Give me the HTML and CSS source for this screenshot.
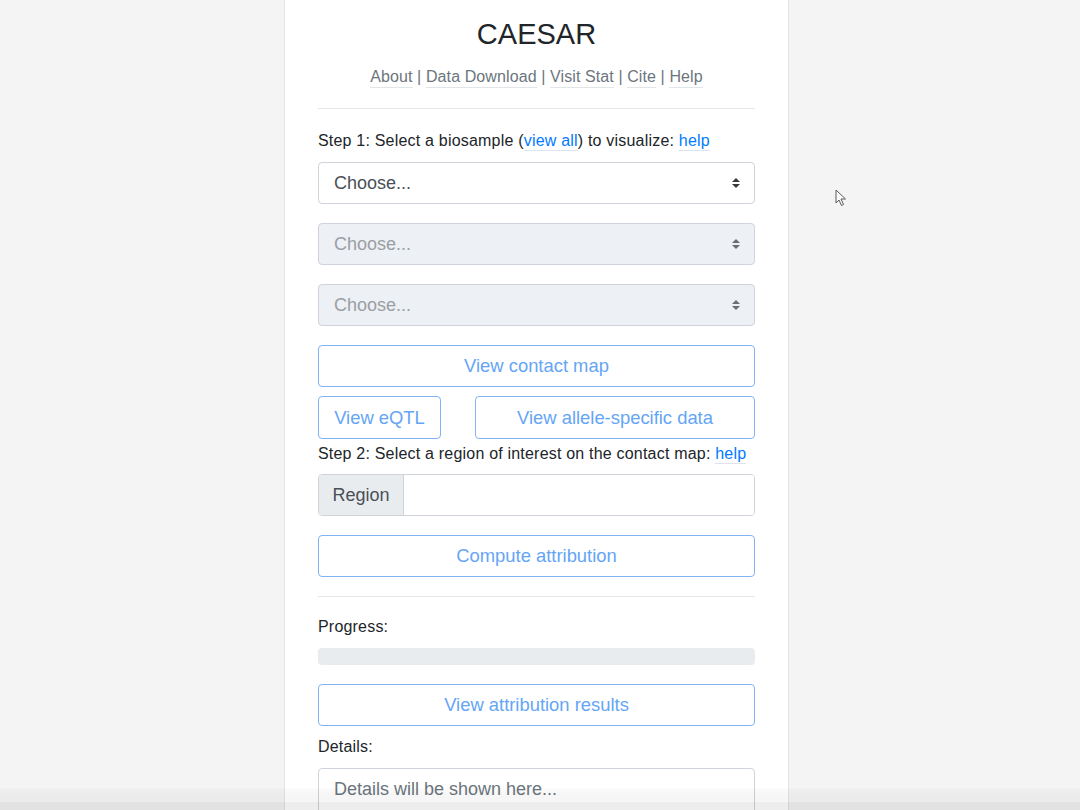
FILE: index.html
```html
<!DOCTYPE html>
<html lang="en">
<head>
<meta charset="utf-8">
<title>CAESAR</title>
<link rel="stylesheet" href="styles.css">
</head>
<body>
<div class="page">
  <main class="panel">
    <h1 class="title">CAESAR</h1>
    <nav class="nav">
      <a class="nav-link">About</a> | <a class="nav-link">Data Download</a> | <a class="nav-link">Visit Stat</a> | <a class="nav-link">Cite</a> | <a class="nav-link">Help</a>
    </nav>
    <hr class="rule rule-top">

    <p class="step">Step 1: Select a biosample (<a class="link">view all</a>) to visualize: <a class="link">help</a></p>

    <div class="select">
      <span>Choose...</span>
      <svg class="caret" width="8" height="10" viewBox="0 0 4 5"><path d="M2 0L0 2h4zm0 5L0 3h4z" fill="#343a40"/></svg>
    </div>
    <div class="select select-disabled">
      <span>Choose...</span>
      <svg class="caret" width="8" height="10" viewBox="0 0 4 5"><path d="M2 0L0 2h4zm0 5L0 3h4z" fill="#343a40"/></svg>
    </div>
    <div class="select select-disabled">
      <span>Choose...</span>
      <svg class="caret" width="8" height="10" viewBox="0 0 4 5"><path d="M2 0L0 2h4zm0 5L0 3h4z" fill="#343a40"/></svg>
    </div>

    <button class="btn btn-block">View contact map</button>
    <div class="btn-row">
      <button class="btn btn-eqtl">View eQTL</button>
      <button class="btn btn-allele">View allele-specific data</button>
    </div>

    <p class="step step-2">Step 2: Select a region of interest on the contact map: <a class="link">help</a></p>

    <div class="input-group">
      <span class="addon">Region</span>
      <span class="input"></span>
    </div>

    <button class="btn btn-block btn-compute">Compute attribution</button>

    <hr class="rule rule-mid">

    <p class="step step-progress">Progress:</p>
    <div class="progress"></div>

    <button class="btn btn-block btn-results">View attribution results</button>

    <p class="step step-details">Details:</p>
    <div class="textarea">Details will be shown here...</div>
  </main>
</div>

<svg class="cursor" width="12" height="18" viewBox="0 0 12 18"><path d="M1 1 L1 14 L4 11 L6.5 16.5 L8.5 15.5 L6 10 L10.5 10 Z" fill="#fff" stroke="#333" stroke-width="1"/></svg>
<div class="bottom-bar"></div>
</body>
</html>
```

FILE: styles.css
```css
html {
  overflow: hidden;
}

body {
  margin: 0;
  background: #f4f4f4;
  font-family: "Liberation Sans", Arial, sans-serif;
  color: #212529;
}

.page {
  padding-right: 7px;
}

.panel {
  width: 437px;
  margin: 0 auto;
  padding: 16px 33px 40px;
  background: #fff;
  border-left: 1px solid #e4e4e4;
  border-right: 1px solid #e4e4e4;
  min-height: 900px;
  display: flex;
  flex-direction: column;
}

.title {
  margin: 0;
  font-size: 29px;
  line-height: 36px;
  font-weight: 400;
  text-align: center;
  color: #212529;
}

.nav {
  margin-top: 13px;
  text-align: center;
  font-size: 16px;
  line-height: 24px;
  letter-spacing: 0.1px;
  color: #6c757d;
}

.nav-link {
  color: #6c757d;
  padding-bottom: 2px;
  border-bottom: 1px solid #e2e5e8;
}

.rule {
  width: 100%;
  margin: 0;
  border: 0;
  border-top: 1px solid #e6e6e6;
}

.rule-top {
  margin-top: 19px;
}

.rule-mid {
  margin-top: 19px;
}

.step {
  margin: 21px 0 0;
  font-size: 16px;
  line-height: 22px;
  letter-spacing: 0.2px;
  color: #212529;
}

.link {
  color: #007bff;
  padding-bottom: 1px;
  border-bottom: 1px solid #dde4ec;
}

.select {
  box-sizing: border-box;
  height: 42px;
  margin-top: 10px;
  margin-bottom: 9px;
  padding: 0 14px 0 15px;
  display: flex;
  align-items: center;
  justify-content: space-between;
  border: 1px solid #ced4da;
  border-radius: 4px;
  background: #fff;
  font-size: 18px;
  color: #495057;
}

.select-disabled {
  background: #edf0f4;
  color: #9a9fa5;
}

.select-disabled .caret path {
  fill: #686d72;
}

.btn {
  box-sizing: border-box;
  height: 42px;
  padding: 0;
  white-space: nowrap;
  border: 1px solid #80b3f6;
  border-radius: 4px;
  background: #fff;
  color: #65a5f6;
  font-family: "Liberation Sans", Arial, sans-serif;
  font-size: 18.4px;
}

.btn-block {
  width: 100%;
  margin-top: 10px;
}

.btn-row {
  margin-top: 9px;
  display: flex;
  justify-content: space-between;
}

.btn-eqtl {
  width: 123px;
  height: 43px;
}

.btn-allele {
  width: 280px;
  height: 43px;
}

.step-2 {
  margin-top: 4px;
}

.input-group {
  box-sizing: border-box;
  height: 42px;
  margin-top: 9px;
  display: flex;
  border: 1px solid #ced4da;
  border-radius: 4px;
  overflow: hidden;
}

.addon {
  width: 85px;
  box-sizing: border-box;
  display: flex;
  align-items: center;
  justify-content: center;
  background: #e9ecef;
  border-right: 1px solid #ced4da;
  font-size: 18px;
  color: #495057;
}

.input {
  flex: 1;
  background: #fff;
}

.btn-compute {
  margin-top: 19px;
}

.step-progress {
  margin-top: 19px;
}

.progress {
  height: 17px;
  margin-top: 10px;
  background: #e9ecef;
  border-radius: 4px;
}

.btn-results {
  margin-top: 19px;
}

.step-details {
  margin-top: 10px;
}

.textarea {
  box-sizing: border-box;
  height: 110px;
  margin-top: 10px;
  padding: 7px 15px;
  border: 1px solid #ced4da;
  border-radius: 4px;
  font-size: 18px;
  line-height: 27px;
  color: #6c757d;
}

.cursor {
  position: fixed;
  left: 835px;
  top: 189px;
  opacity: 0.8;
}

.bottom-bar {
  position: fixed;
  left: 0;
  right: 0;
  bottom: 0;
  height: 22px;
  background: linear-gradient(to bottom, rgba(0, 0, 0, 0.012) 0, rgba(0, 0, 0, 0.035) 6px, rgba(0, 0, 0, 0.035) 14px, rgba(0, 0, 0, 0.07) 14px, rgba(0, 0, 0, 0.07) 22px);
}
```
